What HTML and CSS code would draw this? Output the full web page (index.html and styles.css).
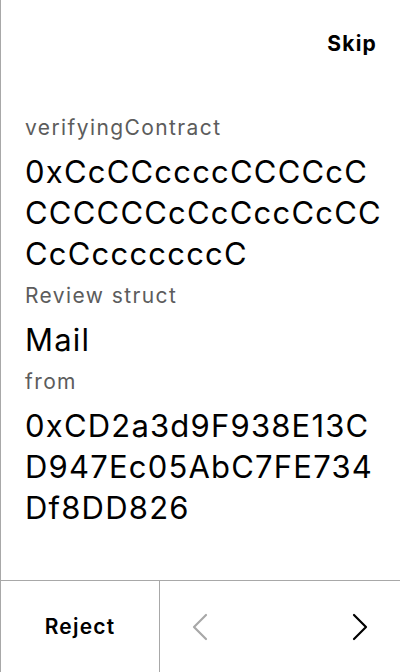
FILE: index.html
```html
<!DOCTYPE html>
<html>
<head>
<meta charset="utf-8">
<link rel="stylesheet" href="styles.css">
</head>
<body>
<div class="screen">
  <header class="top">
    <button class="skip">Skip</button>
  </header>
  <main class="content">
    <div class="label">verifyingContract</div>
    <div class="value addr"><span class="line">0xCcCCccccCCCCcC</span><span class="line">CCCCCCcCcCccCcCC</span><span class="line">CcCcccccccC</span></div>
    <div class="label">Review struct</div>
    <div class="value">Mail</div>
    <div class="label">from</div>
    <div class="value addr"><span class="line">0xCD2a3d9F938E13C</span><span class="line">D947Ec05AbC7FE734</span><span class="line">Df8DD826</span></div>
  </main>
  <footer class="bottom">
    <button class="reject">Reject</button>
    <div class="nav">
      <button class="chev prev" aria-label="Previous">
        <svg width="18" height="28" viewBox="0 0 18 28"><path d="M15 2 L3 14 L15 26" fill="none" stroke="currentColor" stroke-width="2.2" stroke-linecap="round" stroke-linejoin="round"/></svg>
      </button>
      <button class="chev next" aria-label="Next">
        <svg width="18" height="28" viewBox="0 0 18 28"><path d="M3 2 L15 14 L3 26" fill="none" stroke="currentColor" stroke-width="2.2" stroke-linecap="round" stroke-linejoin="round"/></svg>
      </button>
    </div>
  </footer>
</div>
</body>
</html>
```

FILE: styles.css
```css
* { box-sizing: border-box; }
html, body { margin: 0; padding: 0; background: #fff; }
body { font-family: Inter, "Noto Sans", sans-serif; color: #000; letter-spacing: 1.2px; }
button { font-family: inherit; letter-spacing: inherit; background: none; border: 0; padding: 0; color: inherit; cursor: pointer; }
.screen {
  width: 400px;
  height: 672px;
  border-left: 1px solid #a8a8a8;
  display: flex;
  flex-direction: column;
}
.top {
  display: flex;
  justify-content: flex-end;
  padding: 30px 24px 0 24px;
  height: 111px;
}
.skip { font-size: 21px; font-weight: 700; line-height: 28px; height: 28px; margin-right: -1px; }
.content {
  flex: 1;
  padding: 0 4px 0 24px;
}
.label {
  font-size: 21px;
  letter-spacing: 1.4px;
  color: #5c5c5c;
  line-height: 34px;
  margin-bottom: 6px;
}
.value {
  font-size: 31px;
  letter-spacing: 1.2px;
  line-height: 41px;
  margin-bottom: 5px;
}
.line { display: block; white-space: nowrap; }
.bottom {
  height: 92px;
  border-top: 1px solid #a8a8a8;
  display: flex;
}
.reject {
  width: 159px;
  border-right: 1px solid #a8a8a8;
  font-size: 21px;
  font-weight: 600;
}
.nav {
  flex: 1;
  display: flex;
  justify-content: space-between;
  align-items: center;
  padding: 0 31px 0 31px;
}
.chev { display: flex; align-items: center; }
.prev { color: #a8a8a8; }
.next { color: #000; }
```
